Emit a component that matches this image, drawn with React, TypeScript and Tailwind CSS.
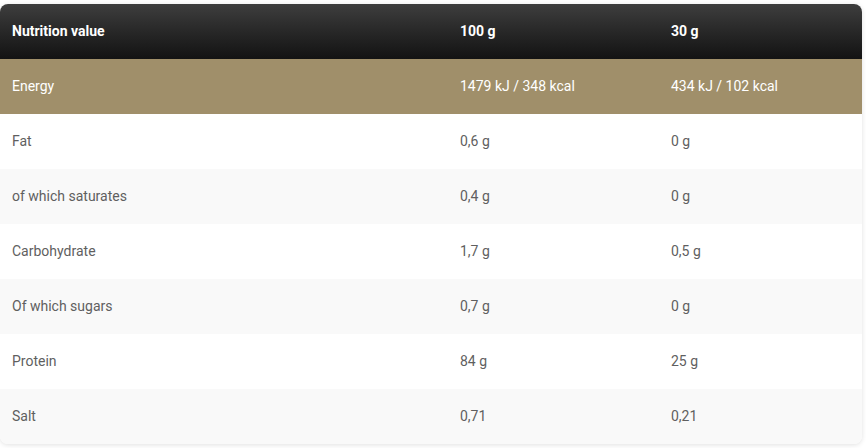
const rows = [
  { name: "Fat", a: "0,6 g", b: "0 g" },
  { name: "of which saturates", a: "0,4 g", b: "0 g" },
  { name: "Carbohydrate", a: "1,7 g", b: "0,5 g" },
  { name: "Of which sugars", a: "0,7 g", b: "0 g" },
  { name: "Protein", a: "84 g", b: "25 g" },
  { name: "Salt", a: "0,71", b: "0,21" },
];

export default function App() {
  return (
    <div className="min-h-screen bg-white pt-[4px] pr-[4px] font-['Roboto',sans-serif] text-[14px]">
      <div className="overflow-hidden rounded-[8px] shadow-[0_1px_5px_rgba(0,0,0,0.12)]">
        <div className="grid h-[55px] grid-cols-[448px_211px_1fr] items-center bg-gradient-to-b from-[#3e3e3e] to-[#131313] font-bold text-white">
          <div className="pl-[12px]">Nutrition value</div>
          <div className="pl-[12px]">100 g</div>
          <div className="pl-[12px]">30 g</div>
        </div>
        <div className="grid h-[55px] grid-cols-[448px_211px_1fr] items-center bg-[#a08f6a] text-white">
          <div className="pl-[12px]">Energy</div>
          <div className="pl-[12px]">1479 kJ / 348 kcal</div>
          <div className="pl-[12px]">434 kJ / 102 kcal</div>
        </div>
        {rows.map((r, i) => (
          <div
            key={r.name}
            className={`grid h-[55px] grid-cols-[448px_211px_1fr] items-center text-[#5f5f5f] ${i % 2 === 1 ? "bg-[#f9f9f9]" : "bg-white"}`}
          >
            <div className="pl-[12px]">{r.name}</div>
            <div className="pl-[12px]">{r.a}</div>
            <div className="pl-[12px]">{r.b}</div>
          </div>
        ))}
      </div>
    </div>
  );
}
